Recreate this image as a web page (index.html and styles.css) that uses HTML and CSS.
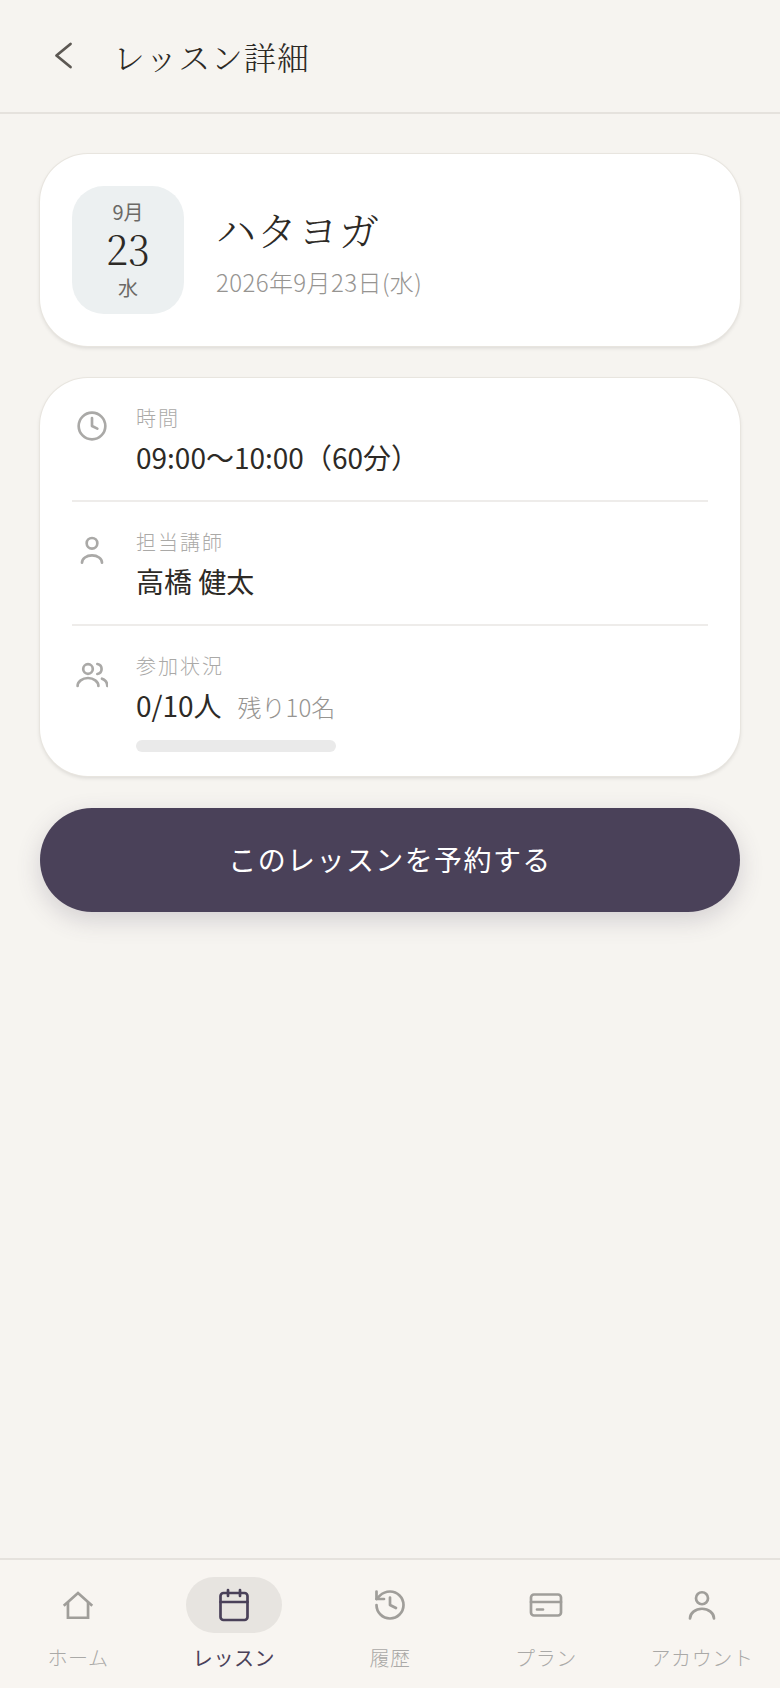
FILE: index.html
```html
<!DOCTYPE html>
<html lang="ja">
<head>
    <meta charset="UTF-8">
    <meta name="viewport" content="width=device-width, initial-scale=1.0">
    <title>レッスン詳細</title>
    <link rel="stylesheet" href="styles.css">
</head>
<body>
    <header class="top-bar">
        <svg class="back-icon" viewBox="0 0 24 24"><path d="M15.25 6 8.25 11.75 15.25 17.5"/></svg>
        <h1>レッスン詳細</h1>
    </header>

    <main class="content">
        <section class="card lesson-card">
            <div class="date-box">
                <span class="date-month">9月</span>
                <span class="date-day">23</span>
                <span class="date-week">水</span>
            </div>
            <div class="lesson-text">
                <h2>ハタヨガ</h2>
                <p class="lesson-date">2026年9月23日(水)</p>
            </div>
        </section>

        <section class="card info-card">
            <div class="info-row">
                <svg class="info-icon" viewBox="0 0 24 24"><circle cx="12" cy="12" r="10"/><path d="M12 6v6l4 2"/></svg>
                <div>
                    <div class="info-label">時間</div>
                    <div class="info-value">09:00〜10:00（60分）</div>
                </div>
            </div>
            <div class="info-row">
                <svg class="info-icon" viewBox="0 0 24 24"><circle cx="12" cy="7" r="4"/><path d="M4.5 21.5a7.5 5.5 0 0 1 15 0"/></svg>
                <div>
                    <div class="info-label">担当講師</div>
                    <div class="info-value">高橋 健太</div>
                </div>
            </div>
            <div class="info-row">
                <svg class="info-icon" viewBox="0 0 24 24"><circle cx="9" cy="8.25" r="3.6"/><path d="M1.2 21a7.8 6 0 0 1 15.6 0"/><path d="M16 4.5a3.8 3.8 0 0 1 0 7.5"/><path d="M23.5 21a6 6 0 0 0-4-5.5"/></svg>
                <div>
                    <div class="info-label">参加状況</div>
                    <div class="info-value">0/10人<span class="info-note">残り10名</span></div>
                    <div class="progress"></div>
                </div>
            </div>
        </section>

        <button class="reserve-btn" type="button">このレッスンを予約する</button>
    </main>

    <nav class="bottom-nav">
        <a class="nav-item">
            <span class="nav-icon"><svg class="square" viewBox="0 0 24 24"><path d="M2.5 12.5 12 4l9.5 8.5"/><path d="M5.3 10v10.5h13.4V10"/></svg></span>
            ホーム
        </a>
        <a class="nav-item active">
            <span class="nav-icon"><svg viewBox="0 0 24 24"><rect x="3" y="4" width="18" height="18" rx="2"/><path d="M8 2v4M16 2v4M3 10h18"/></svg></span>
            レッスン
        </a>
        <a class="nav-item">
            <span class="nav-icon"><svg viewBox="0 0 24 24"><path d="M3 12a9 9 0 1 0 9-9 9.75 9.75 0 0 0-6.74 2.74L3 8"/><path d="M3 3v5h5"/><path d="M12 7v5l4 2"/></svg></span>
            履歴
        </a>
        <a class="nav-item">
            <span class="nav-icon"><svg viewBox="0 0 24 24"><rect x="2" y="5" width="20" height="14" rx="2"/><path d="M2 10h20M6 15h4"/></svg></span>
            プラン
        </a>
        <a class="nav-item">
            <span class="nav-icon"><svg viewBox="0 0 24 24"><circle cx="12" cy="7.5" r="4"/><path d="M4 21a8 6.5 0 0 1 16 0"/></svg></span>
            アカウント
        </a>
    </nav>
</body>
</html>
```

FILE: styles.css
```css
* {
    box-sizing: border-box;
}
body {
    margin: 0;
    height: 100vh;
    display: flex;
    flex-direction: column;
    background-color: #f6f4f0;
    color: #2d2a26;
    font-family: "Noto Sans CJK JP", "Noto Sans", sans-serif;
}
svg {
    fill: none;
    stroke: currentColor;
    stroke-width: 2;
    stroke-linecap: round;
    stroke-linejoin: round;
}
.top-bar {
    height: 114px;
    padding: 0 40px;
    display: flex;
    align-items: center;
    gap: 25px;
    border-bottom: 2px solid #e5e2dd;
}
.back-icon {
    width: 48px;
    height: 48px;
    color: #5c5853;
    stroke-width: 1.4;
}
h1 {
    margin: 0;
    font-family: "Noto Serif CJK JP", "Liberation Serif", serif;
    font-size: 32px;
    font-weight: 300;
    letter-spacing: 0.8px;
}
.content {
    flex: 1;
    padding: 40px;
    display: flex;
    flex-direction: column;
    gap: 32px;
}
.card {
    background-color: #fff;
    border-radius: 48px;
    box-shadow: 0 0 0 1px #e8e5df, 0 2px 4px rgba(0,0,0,0.12);
}
.lesson-card {
    padding: 32px;
    display: flex;
    align-items: center;
    gap: 32px;
}
.date-box {
    width: 112px;
    height: 128px;
    border-radius: 32px;
    background-color: #ecf0f1;
    display: flex;
    flex-direction: column;
    align-items: center;
    justify-content: center;
    color: #6b6966;
}
.date-month, .date-week {
    font-size: 20px;
    line-height: 28px;
}
.date-day {
    margin: -2px 0 2px;
    font-family: "Noto Serif CJK JP", "Liberation Serif", serif;
    font-size: 40px;
    font-weight: 300;
    line-height: 48px;
    color: #2d2a26;
}
.lesson-text {
    padding-bottom: 3px;
}
h2 {
    margin: 0 0 5px;
    font-family: "Noto Serif CJK JP", "Liberation Serif", serif;
    font-size: 40px;
    font-weight: 300;
    letter-spacing: 1px;
    line-height: 60px;
}
.lesson-date {
    margin: 0;
    font-size: 24px;
    font-weight: 300;
    letter-spacing: 0.4px;
    color: #969491;
}
.info-card {
    padding: 0 32px;
}
.info-row {
    padding: 26px 0 21px;
    display: flex;
    gap: 28px;
    border-bottom: 2px solid #eeecea;
}
.info-row:last-child {
    padding-bottom: 24px;
    border-bottom: none;
}
.info-icon {
    width: 32px;
    height: 32px;
    margin: 6px 0 0 4px;
    color: #aaa9a7;
}
.info-label {
    font-size: 20px;
    line-height: 28px;
    letter-spacing: 2px;
    color: #aaa9a7;
    font-weight: 300;
}
.info-value {
    margin-top: 3px;
    font-size: 28px;
    line-height: 44px;
}
.info-note {
    margin-left: 16px;
    font-size: 24px;
    font-weight: 300;
    line-height: 1;
    color: #969491;
}
.progress {
    width: 200px;
    height: 12px;
    margin-top: 13px;
    border-radius: 6px;
    background-color: #eaeaea;
}
.reserve-btn {
    height: 104px;
    padding-bottom: 4px;
    border: none;
    border-radius: 52px;
    background-color: #4a4159;
    color: #fff;
    font-family: inherit;
    font-size: 28px;
    letter-spacing: 1.4px;
    box-shadow: 0 8px 24px rgba(74,65,89,0.2);
}
.bottom-nav {
    height: 130px;
    display: grid;
    grid-template-columns: repeat(5, 1fr);
    border-top: 2px solid #e5e2dd;
    background-color: #f8f5f1;
}
.nav-item {
    padding-top: 17px;
    display: flex;
    flex-direction: column;
    align-items: center;
    font-size: 20px;
    line-height: 28px;
    letter-spacing: 0.6px;
    font-weight: 300;
    color: #aaa9a7;
}
.nav-icon {
    width: 96px;
    height: 56px;
    margin-bottom: 11px;
    border-radius: 28px;
    display: flex;
    align-items: center;
    justify-content: center;
    color: #a09e9a;
}
.nav-icon svg {
    width: 36px;
    height: 36px;
    stroke-width: 1.8;
}
.nav-icon svg.square {
    stroke-linecap: butt;
    stroke-linejoin: miter;
}
.active {
    color: #4a4159;
    font-weight: 400;
}
.active .nav-icon {
    background-color: #e7e4e0;
    color: #4a4159;
}
```
